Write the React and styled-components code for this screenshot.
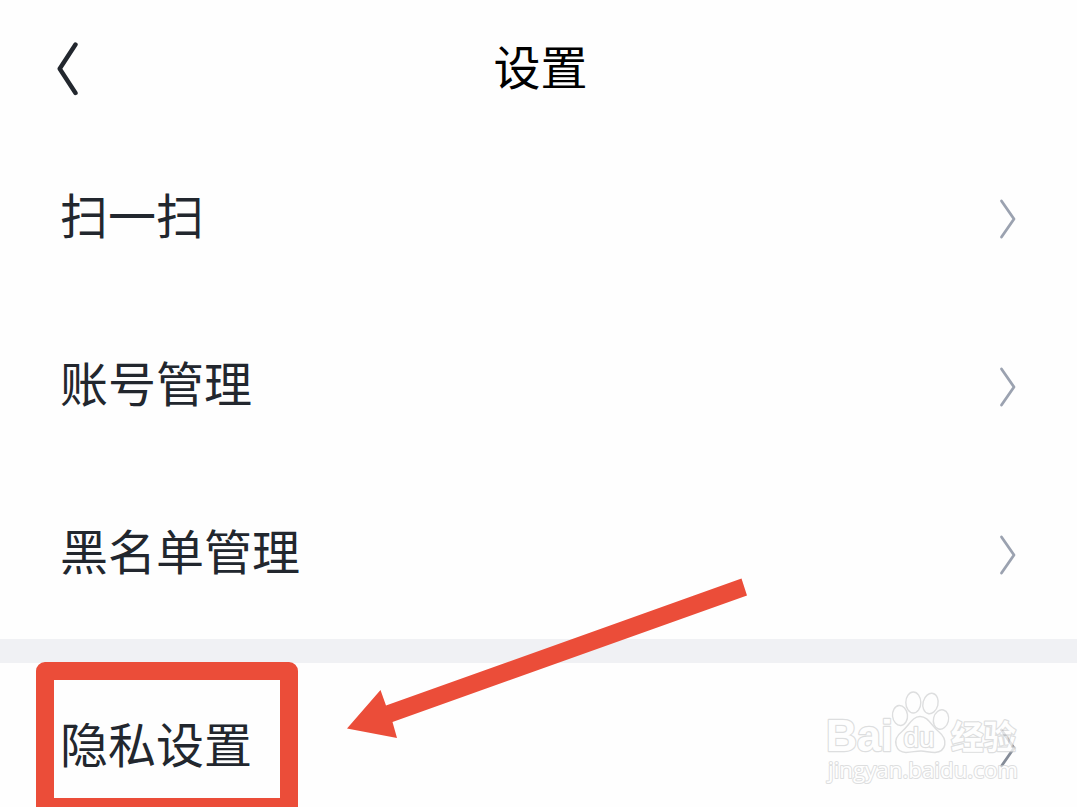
import styled, { createGlobalStyle } from "styled-components";

const App = () => {
    return (
        <Container>
            <GlobalStyle />
            <Header>
                <BackButton aria-label="返回">
                    <svg width="24" height="56" viewBox="0 0 24 56">
                        <path d="M20.500 4.500L4.700 28.700L20.500 53" />
                    </svg>
                </BackButton>
                <Title>设置</Title>
            </Header>
            <Row label="扫一扫" />
            <Row label="账号管理" />
            <Row label="黑名单管理" />
            <Divider />
            <Row label="隐私设置" arrowColor="#858c98" />
            <Highlight />
            <Arrow viewBox="0 0 410 170">
                <path d="M401.500 7.500L407 24.500L52.500 151L57 167L7 157.500L40.500 119L46 134.500Z" />
            </Arrow>
            <Watermark />
        </Container>
    );
}

const Row = ({ label, arrowColor }) => (
    <Item>
        <Label>{label}</Label>
        <Chevron viewBox="0 0 20 44" $color={arrowColor}>
            <path d="M3.500 4L16 22L3.500 40" />
        </Chevron>
    </Item>
);

const Watermark = () => (
    <Mark viewBox="0 0 210 110">
        <g fill="#fff" stroke="#d3d4d5" strokeWidth="1.4" strokeLinejoin="round">
            <ellipse cx="80" cy="29.500" rx="7.500" ry="10" transform="rotate(-6 80 29.500)" />
            <ellipse cx="93.300" cy="16.500" rx="7.500" ry="10.500" />
            <ellipse cx="110.500" cy="17.500" rx="7.500" ry="10.300" transform="rotate(14 110.500 17.500)" />
            <ellipse cx="121" cy="33.500" rx="7.500" ry="9.800" transform="rotate(14 121 33.500)" />
            <path d="M100 30.500C92 30.500 89 40 82 45.500C71 54 76 66.500 86 66.500C93 66 96 65 101 65C106 65 109 66.500 115 66.500C126 65.500 129 54 118 45C111 39 108 30.500 100 30.500Z" />
            <MarkText x="6" y="65" size="44" textLength="67" lengthAdjust="spacingAndGlyphs">Bai</MarkText>
            <MarkText x="83.500" y="61" size="27" weight="400" textLength="31" lengthAdjust="spacingAndGlyphs">du</MarkText>
            <MarkText x="131" y="63" size="33" textLength="65" lengthAdjust="spacingAndGlyphs">经验</MarkText>
            <SiteText x="8" y="92" textLength="190" lengthAdjust="spacingAndGlyphs">jingyan.baidu.com</SiteText>
        </g>
    </Mark>
);

const GlobalStyle = createGlobalStyle`
    body{
        margin:0;
        background:#fefefe;
    }
`;

const Container = styled.main`
    position:relative;
    height:807px;
    overflow:hidden;
    background:#fefefe;
    color:#22272e;
    font-family:"Noto Sans CJK SC", sans-serif;
`;

const Header = styled.header`
    display:grid;
    grid-template-columns:24px 1fr 24px;
    align-items:center;
    box-sizing:border-box;
    height:134px;
    padding:0 51px 0 55px;
`;

const BackButton = styled.button`
    display:flex;
    padding:0;
    border:0;
    background:none;
    svg{
        display:block;
        margin-top:1px;
    }
    path{
        fill:none;
        stroke:#22272e;
        stroke-width:4.4;
        stroke-linecap:round;
        stroke-linejoin:round;
    }
`;

const Title = styled.h1`
    margin:0;
    padding-bottom:4px;
    color:#000;
    font-size:47px;
    font-weight:400;
    line-height:68px;
    text-align:center;
`;

const Item = styled.div`
    display:flex;
    align-items:center;
    justify-content:space-between;
    box-sizing:border-box;
    height:168px;
    padding:0 59px 0 60px;
`;

const Label = styled.span`
    padding-bottom:11px;
    font-size:48px;
    line-height:70px;
`;

const Chevron = styled.svg`
    width:20px;
    height:44px;
    margin-top:2px;
    path{
        fill:none;
        stroke:${(props) => props.$color || "#9ba2b0"};
        stroke-width:2.8;
        stroke-linecap:round;
        stroke-linejoin:round;
    }
`;

const Divider = styled.div`
    height:24px;
    margin-top:1px;
    background:#f0f1f4;
`;

const Highlight = styled.div`
    position:absolute;
    left:36px;
    top:662px;
    box-sizing:border-box;
    width:262px;
    height:154px;
    border:18px solid #eb4d39;
    border-radius:9px;
`;

const Arrow = styled.svg`
    position:absolute;
    left:340px;
    top:571px;
    width:410px;
    height:170px;
    fill:#eb4d39;
`;

const Mark = styled.svg`
    position:absolute;
    left:820px;
    top:686px;
    width:210px;
    height:110px;
    opacity:.75;
`;

const MarkText = styled.text`
    font-family:"Liberation Sans", "Noto Sans CJK SC", sans-serif;
    font-size:${(props) => props.size}px;
    font-weight:${(props) => props.weight || 700};
    stroke-width:2.4px;
    paint-order:stroke;
`;

const SiteText = styled.text`
    font-family:"Open Sans", sans-serif;
    font-size:22px;
    font-weight:400;
    stroke-width:2px;
    paint-order:stroke;
`;

export default App;
